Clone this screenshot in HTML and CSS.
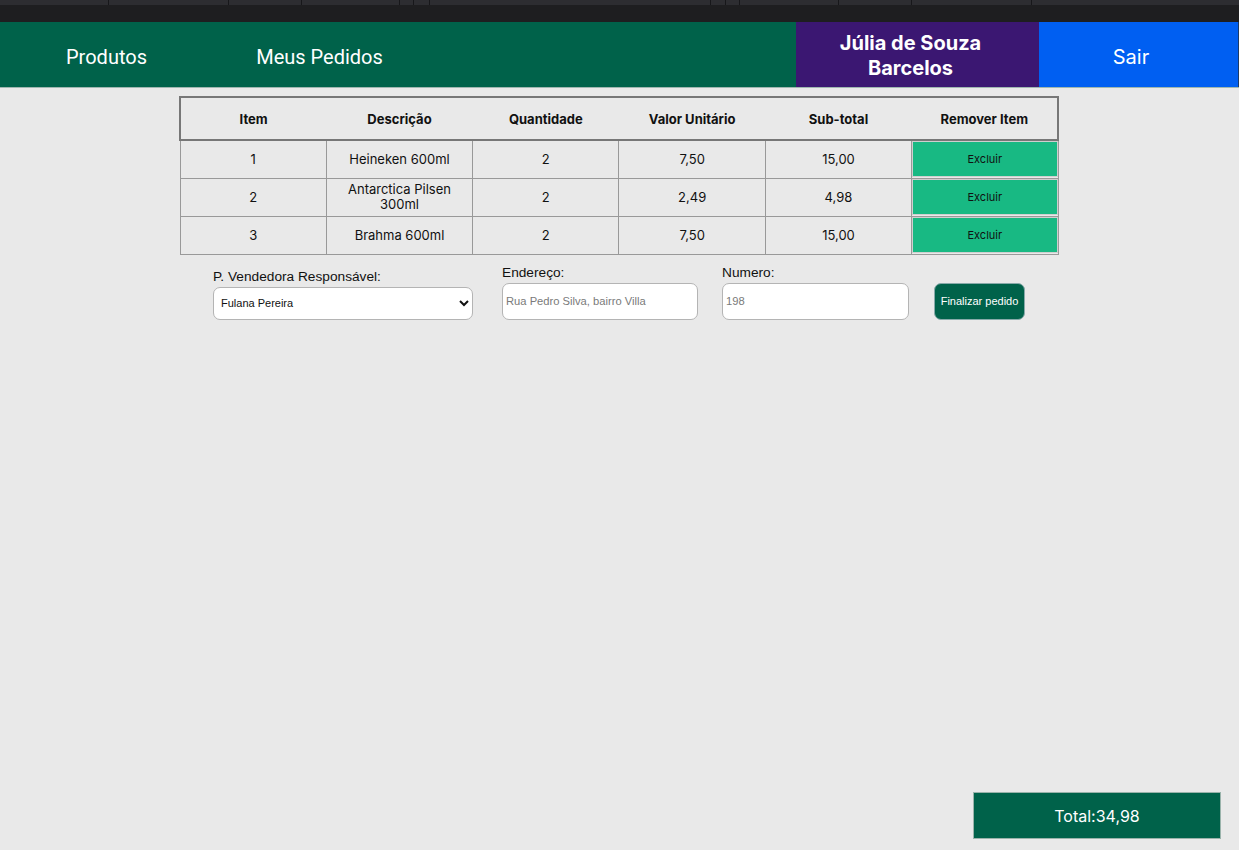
FILE: index.html
```html
<!DOCTYPE html>
<html lang="pt-BR">
<head>
<meta charset="utf-8">
<title>Carrinho</title>
<link rel="stylesheet" href="styles.css">
</head>
<body>
<div class="chrome">
  <div class="tabs">
    <span class="seg" style="width:109px"></span>
    <span class="seg" style="width:120px"></span>
    <span class="seg" style="width:73px"></span>
    <span class="seg" style="width:98px"></span>
    <span class="seg" style="width:14px"></span>
    <span class="seg" style="width:16px"></span>
    <span class="seg" style="width:281px"></span>
    <span class="seg" style="width:15px"></span>
    <span class="seg" style="width:14px"></span>
    <span class="seg" style="width:99px"></span>
    <span class="seg" style="width:73px"></span>
    <span class="seg" style="width:120px"></span>
    <span class="seg last"></span>
  </div>
</div>
<nav class="topbar">
  <a class="nav-link">Produtos</a>
  <a class="nav-link">Meus Pedidos</a>
  <div class="spacer"></div>
  <div class="user">Júlia de Souza<br>Barcelos</div>
  <a class="logout">Sair</a>
</nav>
<main class="content">
  <table class="cart">
    <thead>
      <tr>
        <th>Item</th><th>Descrição</th><th>Quantidade</th><th>Valor Unitário</th><th>Sub-total</th><th>Remover Item</th>
      </tr>
    </thead>
    <tbody>
      <tr><td>1</td><td>Heineken 600ml</td><td>2</td><td>7,50</td><td>15,00</td><td class="btn-cell"><button class="remove">Excluir</button></td></tr>
      <tr><td>2</td><td>Antarctica Pilsen<br>300ml</td><td>2</td><td>2,49</td><td>4,98</td><td class="btn-cell"><button class="remove">Excluir</button></td></tr>
      <tr><td>3</td><td>Brahma 600ml</td><td>2</td><td>7,50</td><td>15,00</td><td class="btn-cell"><button class="remove">Excluir</button></td></tr>
    </tbody>
  </table>
  <form class="checkout">
    <label class="field f-seller">
      <span class="lbl">P. Vendedora Responsável:</span>
      <select class="select"><option>Fulana Pereira</option></select>
    </label>
    <label class="field f-address">
      <span class="lbl">Endereço:</span>
      <input class="input" placeholder="Rua Pedro Silva, bairro Villa">
    </label>
    <label class="field f-number">
      <span class="lbl">Numero:</span>
      <input class="input" placeholder="198">
    </label>
    <button type="button" class="finish">Finalizar pedido</button>
  </form>
  <div class="total">Total:34,98</div>
</main>
</body>
</html>
```

FILE: styles.css
```css
* { box-sizing: border-box; }
html, body { margin: 0; padding: 0; }
body {
  width: 1239px;
  height: 850px;
  background: #e9e9e9;
  font-family: Inter, "Liberation Sans", sans-serif;
  display: flex;
  flex-direction: column;
  overflow: hidden;
}
.chrome {
  height: 22px;
  background: #1e1e20;
  flex: none;
}
.tabs {
  height: 5px;
  background: #2d2d31;
  display: flex;
}
.seg { height: 100%; border-right: 1px solid #17171a; flex: none; }
.seg.last { flex: 1; border-right: 0; }
.topbar {
  height: 66px;
  flex: none;
  display: flex;
  background: #00624a;
  border-bottom: 1px solid #9fb7b0;
}
.nav-link {
  width: 213px;
  display: flex;
  align-items: center;
  justify-content: center;
  color: #fff;
  font-family: Roboto, Inter, sans-serif;
  font-size: 20px;
  padding-top: 5px;
}
.spacer { flex: 1; }
.user {
  width: 243px;
  background: #3b1772;
  color: #fff;
  font-weight: 700;
  font-size: 20px;
  line-height: 25px;
  text-align: center;
  display: flex;
  align-items: center;
  justify-content: center;
  padding: 3px 14px 0 0;
}
.logout {
  width: 200px;
  background: #005ff2;
  color: #fff;
  font-size: 20px;
  display: flex;
  align-items: center;
  justify-content: center;
  border-right: 1px solid #1c3a66;
  padding: 5px 15px 0 0;
}
.content {
  flex: 1;
  display: flex;
  flex-direction: column;
}
.cart {
  margin: 8px 0 0 179px;
  width: 880px;
  border-collapse: collapse;
  table-layout: fixed;
  font-size: 13px;
  color: #111;
}
.cart th {
  height: 43px;
  font-weight: 700;
  border-top: 2px solid #777;
  border-bottom: 2px solid #777;
  padding: 0;
}
.cart th:first-child { border-left: 2px solid #777; }
.cart th:last-child { border-right: 2px solid #777; }
.cart td {
  height: 38px;
  border: 1.5px solid #999;
  text-align: center;
  padding: 0;
  line-height: 15px;
}
.cart td.btn-cell { padding: 0; }
.remove {
  display: block;
  width: 100%;
  height: 36px;
  background: #18b983;
  border: 1px solid #cfcfcf;
  font-family: Inter, sans-serif;
  font-size: 11px;
  color: #111;
  margin: 0;
}
.checkout {
  display: flex;
  align-items: flex-end;
  margin: 10px 0 0 213px;
  font-family: "Liberation Sans", Arial, sans-serif;
}
.field { display: flex; flex-direction: column; }
.lbl { font-size: 13.7px; color: #111; }
.f-seller .lbl { margin-bottom: 3px; }
.f-address .lbl, .f-number .lbl { margin-bottom: 3px; }
.select {
  width: 260px;
  height: 33px;
  background: #fff;
  border: 1px solid #b4b4b4;
  border-radius: 7px;
  font-family: "Liberation Sans", Arial, sans-serif;
  font-size: 11px;
  color: #111;
  padding: 0 3px;
}
.input {
  height: 37px;
  background: #fff;
  border: 1px solid #b4b4b4;
  border-radius: 7px;
  font-family: "Liberation Sans", Arial, sans-serif;
  font-size: 11.2px;
  padding: 0 3px;
}
.input::placeholder { color: #7a7a7a; }
.f-address { margin-left: 29px; }
.f-address .input { width: 196px; }
.f-number { margin-left: 24px; }
.f-number .input { width: 187px; }
.finish {
  margin-left: 25px;
  width: 91px;
  height: 37px;
  background: #00624a;
  border: 1px solid #8aa;
  border-radius: 7px;
  color: #fff;
  font-family: "Liberation Sans", Arial, sans-serif;
  font-size: 11px;
  padding: 0;
}
.total {
  margin-top: auto;
  align-self: flex-end;
  margin-right: 18px;
  margin-bottom: 11px;
  width: 248px;
  height: 47px;
  background: #00624a;
  border: 1px solid #9ab3ab;
  color: #fff;
  font-size: 16px;
  display: flex;
  align-items: center;
  justify-content: center;
}
```
